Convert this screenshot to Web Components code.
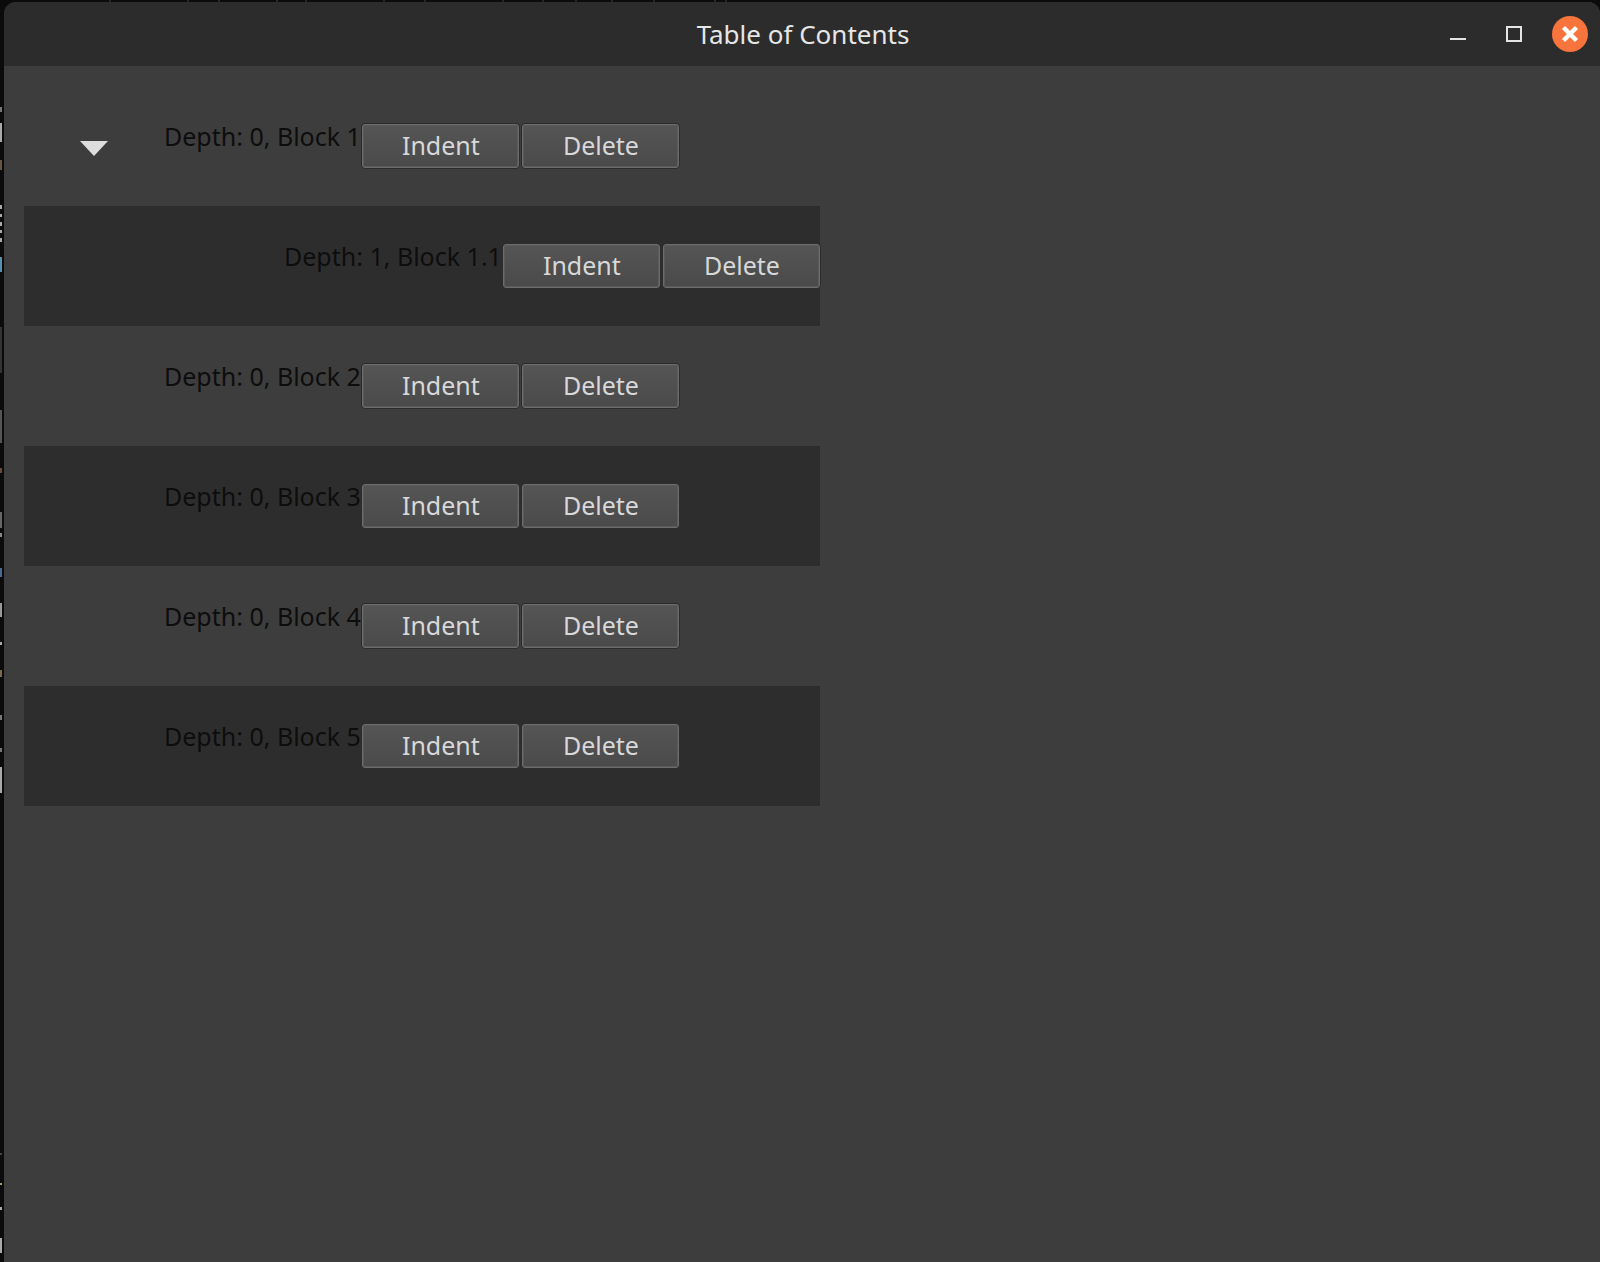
<!DOCTYPE html>
<html>
<head>
<meta charset="utf-8">
<title>Table of Contents</title>
<style>
    html, body { margin: 0; height: 100%; background: #0b0b0b; }
</style>
</head>
<body>
<app-window heading="Table of Contents">
    <toc-row depth="0" label="Depth: 0, Block 1" toggle></toc-row>
    <toc-row depth="1" label="Depth: 1, Block 1.1" shaded></toc-row>
    <toc-row depth="0" label="Depth: 0, Block 2"></toc-row>
    <toc-row depth="0" label="Depth: 0, Block 3" shaded></toc-row>
    <toc-row depth="0" label="Depth: 0, Block 4"></toc-row>
    <toc-row depth="0" label="Depth: 0, Block 5" shaded></toc-row>
</app-window>

<script>
// Bits of the desktop that show behind the window edge: [from, to, colour]
const LEFT_EDGE = [
    [107, 112, '#777'], [123, 142, '#aaa'], [160, 170, '#665544'], [205, 209, '#aaa'],
    [214, 217, '#aaa'], [222, 226, '#aaa'], [230, 233, '#aaa'], [238, 242, '#aaa'],
    [257, 272, '#5a8fb0'], [327, 373, '#333'], [410, 443, '#555'], [468, 473, '#6a4a3a'],
    [512, 528, '#666'], [533, 537, '#888'], [568, 577, '#4a6a90'], [603, 617, '#999'],
    [642, 645, '#aaa'], [670, 677, '#7a6a50'], [715, 720, '#777'], [748, 752, '#777'],
    [767, 793, '#aaa'], [1153, 1155, '#444'], [1183, 1185, '#b09a70'], [1207, 1210, '#aaa'],
    [1238, 1253, '#aaa']
];
const TOP_EDGE = [109, 187, 218, 276, 305, 383, 424, 502, 542, 575, 611, 653, 714, 725];

function stripes(angle, parts, base) {
    let at = 0;
    const stops = [];
    for (const [from, to, colour] of parts) {
        stops.push(`${base} ${at}px ${from}px`, `${colour} ${from}px ${to}px`);
        at = to;
    }
    stops.push(`${base} ${at}px 100%`);
    return `linear-gradient(${angle}, ${stops.join(', ')})`;
}

// Window frame with the title bar, rows go in the slot
class AppWindow extends HTMLElement {
    constructor() {
        super();
        this.attachShadow({ mode: 'open' });
        const left = stripes('180deg', LEFT_EDGE, '#0b0b0b');
        const top = stripes('90deg', TOP_EDGE.map(x => [x, x + 2, '#262626']), '#0b0b0b');
        this.shadowRoot.innerHTML = `
            <style>
                :host {
                    display: block;
                    height: 1262px;
                    box-sizing: border-box;
                    padding: 2px 0 0 4px;
                    font-family: "Noto Sans", sans-serif;
                    background:
                        ${left} 0 0 / 2px 100% no-repeat,
                        ${top} 0 0 / 100% 2px no-repeat,
                        #0b0b0b;
                }
                .frame {
                    height: 100%;
                    display: flex;
                    flex-direction: column;
                    background: #3d3d3d;
                    border-top-left-radius: 12px;
                    border-top-right-radius: 12px;
                    overflow: hidden;
                }
                .bar {
                    flex: none;
                    height: 64px;
                    display: flex;
                    align-items: center;
                    justify-content: center;
                    position: relative;
                    background: #2c2c2c;
                    color: #e6e6e6;
                    font-size: 26px;
                }
                .title { position: relative; left: 1px; }
                .controls {
                    position: absolute;
                    top: 0;
                    right: 0;
                    bottom: 0;
                    display: flex;
                    align-items: center;
                    padding-right: 12px;
                }
                svg { display: block; }
                .min { margin-right: 40px; }
                .max { margin-right: 30px; }
                .content {
                    flex: 1;
                    padding: 20px 0 0 20px;
                }
            </style>
            <div class="frame">
                <div class="bar">
                    <span class="title">${this.getAttribute('heading')}</span>
                    <div class="controls">
                        <svg class="min" width="16" height="16" viewBox="0 0 16 16"><rect y="12" width="16" height="2" fill="#e4e4e4"/></svg>
                        <svg class="max" width="16" height="16" viewBox="0 0 16 16"><rect x="1" y="1" width="14" height="14" fill="none" stroke="#e4e4e4" stroke-width="2"/></svg>
                        <svg width="36" height="36" viewBox="0 0 36 36">
                            <circle cx="18" cy="18" r="18" fill="#f7743d"/>
                            <path d="M11.5 11.5 L24.5 24.5 M24.5 11.5 L11.5 24.5" stroke="#fff" stroke-width="4.4" fill="none"/>
                        </svg>
                    </div>
                </div>
                <div class="content"><slot></slot></div>
            </div>
        `;
    }
}

// Gtk style push button
class ToolButton extends HTMLElement {
    constructor() {
        super();
        this.attachShadow({ mode: 'open' });
        this.shadowRoot.innerHTML = `
            <style>
                :host {
                    display: block;
                    flex: none;
                    width: 159px;
                    height: 46px;
                    box-sizing: border-box;
                    border: 1px solid var(--btn-outer, #2b2b2b);
                    border-radius: 4px;
                }
                .face {
                    height: 100%;
                    box-sizing: border-box;
                    border: 1px solid #6c6c6c;
                    border-radius: 3px;
                    padding: 0 0 2px 1px;
                    background: linear-gradient(#555, #4a4a4a);
                    box-shadow: inset 0 0 0 1px #5a5a5a;
                    color: #d8d8d8;
                    font-size: 25px;
                    display: flex;
                    align-items: center;
                    justify-content: center;
                }
            </style>
            <div class="face"><slot></slot></div>
        `;
    }
}

// One line of the table, depth moves it to the right
class TocRow extends HTMLElement {
    constructor() {
        super();
        this.attachShadow({ mode: 'open' });
        const depth = Number(this.getAttribute('depth') || 0);
        const arrow = this.hasAttribute('toggle')
            ? '<svg class="arrow" width="28" height="16" viewBox="0 0 28 16"><path d="M0 1 L28 1 L14 16 Z" fill="#dedede"/></svg>'
            : '';
        this.shadowRoot.innerHTML = `
            <style>
                :host {
                    display: block;
                    width: 796px;
                    height: 120px;
                    position: relative;
                }
                :host([shaded]) {
                    background: #2d2d2d;
                    --btn-outer: #2d2d2d;
                }
                .line {
                    height: 100%;
                    box-sizing: border-box;
                    display: flex;
                    align-items: center;
                    padding-left: ${140 + depth * 120}px;
                }
                .label {
                    flex: none;
                    align-self: flex-start;
                    margin: 33px 0 0 0;
                    font-size: 25px;
                    line-height: 34px;
                    color: #0d0d0d;
                    white-space: nowrap;
                }
                .buttons { display: flex; gap: 1px; }
                .arrow { position: absolute; left: 56px; top: 54px; }
            </style>
            ${arrow}
            <div class="line">
                <span class="label">${this.getAttribute('label')}</span>
                <div class="buttons">
                    <tool-button>Indent</tool-button>
                    <tool-button>Delete</tool-button>
                </div>
            </div>
        `;
    }
}

customElements.define('app-window', AppWindow);
customElements.define('tool-button', ToolButton);
customElements.define('toc-row', TocRow);
</script>
</body>
</html>
